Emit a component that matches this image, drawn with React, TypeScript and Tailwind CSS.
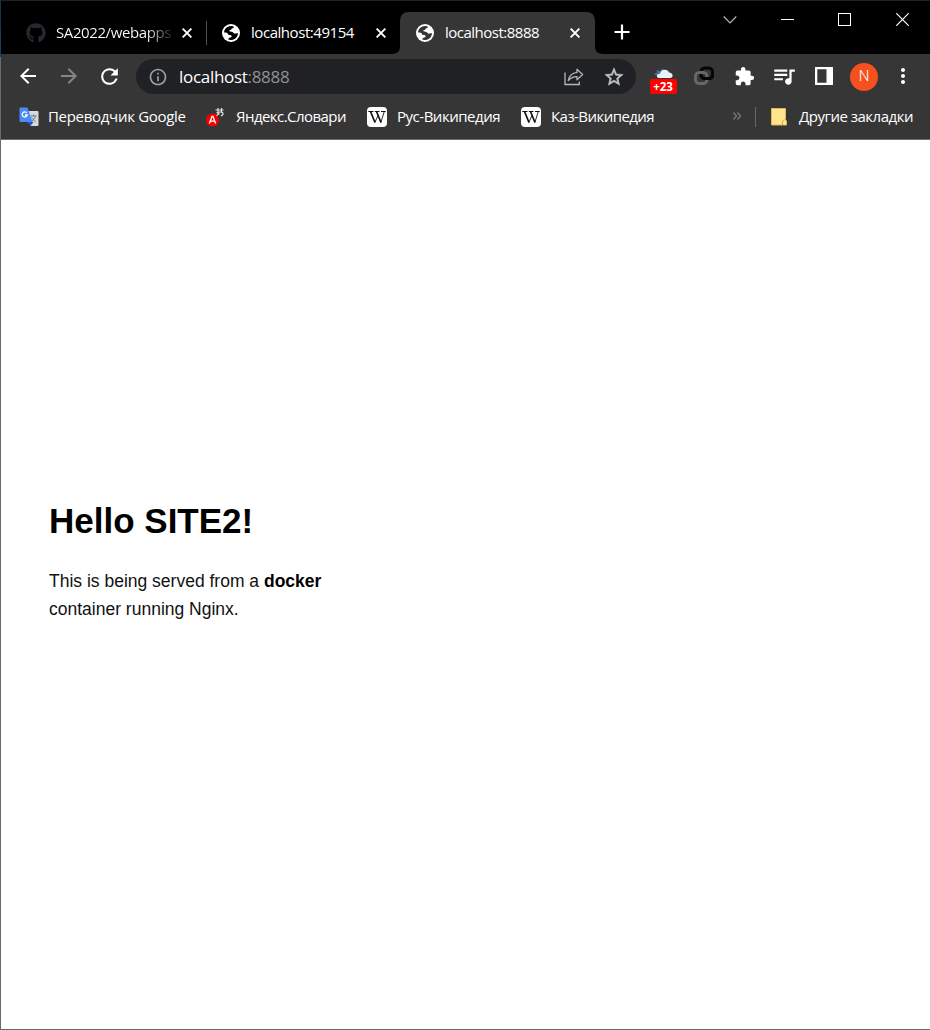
import type { ReactNode } from "react";
import { FaGithub } from "react-icons/fa";
import {
  MdArrowBack,
  MdArrowForward,
  MdExtension,
  MdInfoOutline,
  MdMoreVert,
  MdQueueMusic,
  MdRefresh,
  MdStarOutline,
} from "react-icons/md";

function Globe({ ink }: { ink: string }) {
  return (
    <svg className="h-[18px] w-[18px] shrink-0" viewBox="0 0 18 18" fill="none">
      <circle cx="9" cy="9" r="9" fill="#fff" />
      <path d="M2.100 8.600C2.100 5.200 4.800 2.300 8.800 2c1.500 0 2.400.3 3.200.8-.2 1.200-1 1.600-2.200 1.700-.2 1.200-1.200 1.400-2.300 1.700-.5.9.1 1.300 1.200 1.400 1.500.1 2.400.6 2.900 1.500.6.7 1.300.6 2.200.5.800-.1 1.500-.3 2.200-.2-.5 3.800-3.300 6.600-7.300 6.600-1 0-1.700-.2-2.500-.5.2-1.200 1-1.700 2.200-1.900.9-.2 1.300-.7 1.200-1.500-.2-1-1-1.100-2.200-1.100-1.100 0-1.500-.6-1.700-1.400-.5-.9-1.800-1.100-3.600-1z" fill={ink} />
    </svg>
  );
}

function CloseMark() {
  return (
    <svg className="h-[10px] w-[10px] shrink-0" viewBox="0 0 10 10">
      <path d="M.6.6l8.800 8.800M9.400.6L.6 9.400" stroke="#fff" strokeWidth="1.900" />
    </svg>
  );
}

function Wiki() {
  return (
    <div className="flex h-5 w-5 shrink-0 items-center justify-center overflow-hidden rounded-[4px] bg-white">
      <svg className="h-5 w-5" viewBox="0 0 20 20" fill="none" stroke="#111">
        <path d="M1.300 4.500h5.200M7.800 4.500h4.700M14 4.500h4.700" strokeWidth="1" />
        <path d="M3.500 4.500L8 15.500M9.500 4.500L14 15.500" strokeWidth="1.700" />
        <path d="M7.800 15.500L11 8.500M13.800 15.500L17.300 4.500" strokeWidth="0.900" />
      </svg>
    </div>
  );
}

function Translate() {
  return (
    <svg className="h-5 w-5 shrink-0" viewBox="0 0 20 20">
      <path d="M8 4h10.500q1 0 1 1v13q0 1-1 1h-7z" fill="#d5d8dc" />
      <path d="M11.500 9h6M14.500 7.500V9M16.500 9c-.6 2.500-2 4-4 5.300M12.700 10.500c.7 1.600 2 2.900 4 4" stroke="#607d8b" strokeWidth="1" fill="none" />
      <path d="M8 15h6.500l-3 4z" fill="#3450c4" />
      <path d="M1.500 0.500H8.500L13.500 15H1.500q-1 0-1-1V1.500q0-1 1-1z" fill="#4c8bf5" />
      <path d="M7.700 5.900A2.500 2.500 0 1 0 8.200 8H6" stroke="#fff" strokeWidth="1.300" fill="none" />
    </svg>
  );
}

function Dictionary() {
  return (
    <svg className="h-5 w-5 shrink-0" viewBox="0 0 20 20">
      <circle cx="6.500" cy="13" r="6.500" fill="#f40000" />
      <path d="M3.400 16.500L6 9.500h1l2.600 7M4.300 14.200h4.400" stroke="#fff" strokeWidth="1.300" fill="none" />
      <path d="M9.500 3h8M12 1v7M15.500 1v3.500M10.500 5.500c4-1 7-.5 6.500 1.500-.3 1-1 1.500-2 2M10.500 8.500l3-2" stroke="#e2e2e2" strokeWidth="1.200" fill="none" />
    </svg>
  );
}

function Share() {
  return (
    <svg className="h-[18px] w-5 shrink-0" viewBox="0 0 20 18" fill="none" stroke="#b4b6b9" strokeWidth="1.300">
      <path d="M1 4.500V16.500H15.300V13.500" />
      <path d="M13 1.200L18.600 6.500L13 11.800V8.700C9.500 8.600 7 9.600 4.300 12.500C5 8.200 7.600 4.900 13 4.300z" strokeLinejoin="round" />
    </svg>
  );
}

function Weather() {
  return (
    <div className="flex h-[27px] w-7 shrink-0 flex-col items-center">
      <svg className="h-3 w-5" viewBox="0 0 20 12">
        <path d="M1 7l3-1.500L3.500 3 7 4l3-3 .5 4L6 10z" fill="#42759c" />
        <path d="M6 11q-2.500-.5-2-2.500t3-1.800Q8 3 11.500 2.800T16 5.500q3 0 3.500 2.500T17 11z" fill="#e8f1fa" />
      </svg>
      <div className="flex h-[15px] w-[27px] items-center justify-center rounded-[2px] bg-[#f00] pt-px font-['Open_Sans',sans-serif] text-[11.5px] leading-none font-bold text-white">+23</div>
    </div>
  );
}

function Rings() {
  return (
    <svg className="h-5 w-5 shrink-0" viewBox="0 0 20 20" fill="none" strokeWidth="3">
      <rect x="7" y="2" width="11.500" height="10.500" rx="3.800" stroke="#050505" />
      <rect x="1.500" y="6.500" width="11.500" height="11" rx="3.800" stroke="#66676a" />
      <path d="M18.500 6v2.700q0 3.800-3.800 3.800H10.800q-2 0-3-1.200" stroke="#050505" />
    </svg>
  );
}

function Slot({ w, children }: { w: string; children: ReactNode }) {
  return <div className={"flex shrink-0 items-center justify-center " + w}>{children}</div>;
}

function TabStrip() {
  return (
    <div className="flex h-[54px] shrink-0 items-start border-t border-[#202020] bg-black">
      <div className="mt-[10px] flex h-[43px] w-[189px] shrink-0 items-center pl-[25px]">
        <FaGithub className="h-5 w-5 shrink-0 text-[#24292f]" />
        <span className="mb-px ml-[10px] w-[116px] shrink-0 overflow-hidden bg-linear-to-r from-white from-78% to-[#222] bg-clip-text text-[15px] tracking-[-0.4px] whitespace-nowrap text-transparent">SA2022/webapps</span>
        <div className="ml-[10px]"><CloseMark /></div>
      </div>
      <div className="mt-5 ml-4 h-6 w-px shrink-0 bg-[#505050]" />
      <div className="mt-[10px] flex h-[43px] w-[193px] shrink-0 items-center pl-[15px]">
        <Globe ink="#000" />
        <span className="mb-px ml-[11px] w-[125px] shrink-0 text-[15px] tracking-[-0.45px] whitespace-nowrap">localhost:49154</span>
        <CloseMark />
      </div>
      <svg className="mt-[11px] h-[42px] w-[211px] shrink-0 -mr-[211px] -ml-2" viewBox="0 0 211 42">
        <path d="M0 42Q8 42 8 34V9Q8 0 17 0H194Q203 0 203 9V34Q203 42 211 42z" fill="#363636" />
      </svg>
      <div className="relative mt-[10px] ml-2 flex h-[43px] w-[195px] shrink-0 items-center pl-4">
        <Globe ink="#363636" />
        <span className="mb-px ml-[11px] w-[125px] shrink-0 text-[15px] tracking-[-0.5px] whitespace-nowrap">localhost:8888</span>
        <CloseMark />
      </div>
      <svg className="mt-[23px] ml-[19px] h-4 w-4 shrink-0" viewBox="0 0 16 16">
        <path d="M8 .5v15M.5 8h15" stroke="#fff" strokeWidth="2.200" />
      </svg>
      <svg className="mt-3 ml-[93px] h-[14px] w-[14px] shrink-0" viewBox="0 0 14 14" fill="none">
        <path d="M.7 3.500L7 10l6.300-6.500" stroke="#bbb" strokeWidth="1.100" />
      </svg>
      <svg className="mt-3 ml-[44px] h-[13px] w-[13px] shrink-0" viewBox="0 0 13 13">
        <path d="M0 6.500h13" stroke="#fff" />
      </svg>
      <svg className="mt-3 ml-[44px] h-[13px] w-[13px] shrink-0" viewBox="0 0 13 13">
        <rect x=".5" y=".5" width="12" height="12" stroke="#fff" fill="none" />
      </svg>
      <svg className="mt-3 ml-[45px] h-[13px] w-[13px] shrink-0" viewBox="0 0 13 13">
        <path d="M.3.3l12.400 12.400M12.700.3L.3 12.700" stroke="#fff" strokeWidth="1.200" />
      </svg>
    </div>
  );
}

function Toolbar() {
  return (
    <div className="flex h-11 shrink-0 items-center bg-[#363636] pl-[7px]">
      <Slot w="w-10"><MdArrowBack className="h-6 w-6" /></Slot>
      <Slot w="w-[41px]"><MdArrowForward className="h-6 w-6 text-[#858585]" /></Slot>
      <Slot w="w-10"><MdRefresh className="h-[25px] w-[25px]" /></Slot>
      <div className="mt-px ml-[7px] flex h-[35px] w-[500px] shrink-0 items-center rounded-full bg-[#202124] pl-3">
        <MdInfoOutline className="h-5 w-5 text-[#9aa0a6]" />
        <span className="ml-[11px] grow text-[17px] tracking-[-0.3px] whitespace-nowrap">
          localhost<span className="text-[#8f9194]">:8888</span>
        </span>
        <Share />
        <Slot w="ml-[9px] w-[43px] pr-[1px]"><MdStarOutline className="h-[22px] w-[22px] stroke-[#c4c5c7] stroke-[0.5] text-[#c4c5c7]" /></Slot>
      </div>
      <div className="mt-2 ml-[13px]"><Weather /></div>
      <div className="ml-[17px]"><Rings /></div>
      <Slot w="ml-[10px] w-10"><MdExtension className="h-[21px] w-[21px]" /></Slot>
      <Slot w="w-10"><MdQueueMusic className="h-[26px] w-[26px]" /></Slot>
      <Slot w="w-10">
        <svg className="h-[18px] w-[18px]" viewBox="0 0 18 18">
          <path d="M0 0H18V18H0zM2.300 2.300V15.700H11.500V2.300z" fill="#fff" fillRule="evenodd" />
        </svg>
      </Slot>
      <div className="mt-px ml-[6px] flex h-7 w-7 shrink-0 items-center justify-center rounded-full bg-[#f4511e] font-[Roboto,sans-serif] text-[15px] leading-none font-light">N</div>
      <Slot w="ml-[5px] w-10"><MdMoreVert className="h-6 w-6" /></Slot>
    </div>
  );
}

function Bookmarks() {
  return (
    <div className="flex h-[42px] shrink-0 items-start border-b border-[#6c6c6c] bg-[#363636] pt-[9px] pl-[18px] text-[15px] leading-[18px] whitespace-nowrap">
      <Translate />
      <span className="ml-[9px] w-[158px] shrink-0 tracking-[-0.3px]">Переводчик Google</span>
      <Dictionary />
      <span className="ml-[10px] w-[131px] shrink-0 tracking-[-0.55px]">Яндекс.Словари</span>
      <Wiki />
      <span className="ml-[10px] w-[124px] shrink-0 tracking-[-0.48px]">Рус-Википедия</span>
      <Wiki />
      <span className="ml-[10px] w-[182px] shrink-0 tracking-[-0.55px]">Каз-Википедия</span>
      <svg className="mt-[5px] h-2 w-2 shrink-0" viewBox="0 0 8 8" fill="none" stroke="#77787a" strokeWidth="1.300">
        <path d="M.5.5L3.500 4 .5 7.500M4.500.5L7.500 4l-3 3.500" />
      </svg>
      <div className="ml-[14px] h-5 w-px shrink-0 bg-[#686868]" />
      <svg className="ml-[15px] h-5 w-4 shrink-0" viewBox="0 0 16 20">
        <path d="M.5 1.500h14V13l1 1v4H.5z" fill="#ffe58d" stroke="#d9ba56" />
        <path d="M11.500 18v-4l2-1.500" stroke="#d0aa3d" fill="none" />
      </svg>
      <span className="ml-3 tracking-[-0.5px]">Другие закладки</span>
    </div>
  );
}

export default function App() {
  return (
    <div className="flex h-[1030px] w-[930px] overflow-hidden bg-white font-['Open_Sans','Noto_Sans',sans-serif] text-white">
      <div className="flex w-px shrink-0 flex-col bg-[#6a6a6a]">
        <div className="h-[29px] bg-[#173344]" />
        <div className="h-7 bg-[#153f61]" />
      </div>
      <div className="flex w-[929px] shrink-0 flex-col border-b border-[#6a6a6a]">
        <TabStrip />
        <Toolbar />
        <Bookmarks />
        <main className="flex grow flex-col justify-center pb-[54px] pl-12 font-['Liberation_Sans',Arial,sans-serif] text-[17.5px] leading-7 text-[#111]">
          <h1 className="text-[35px] leading-[56px] font-bold text-black">Hello SITE2!</h1>
          <p className="mt-[18px] w-[290px]">
            This is being served from a <strong className="text-black">docker</strong> container running Nginx.
          </p>
        </main>
      </div>
    </div>
  );
}
